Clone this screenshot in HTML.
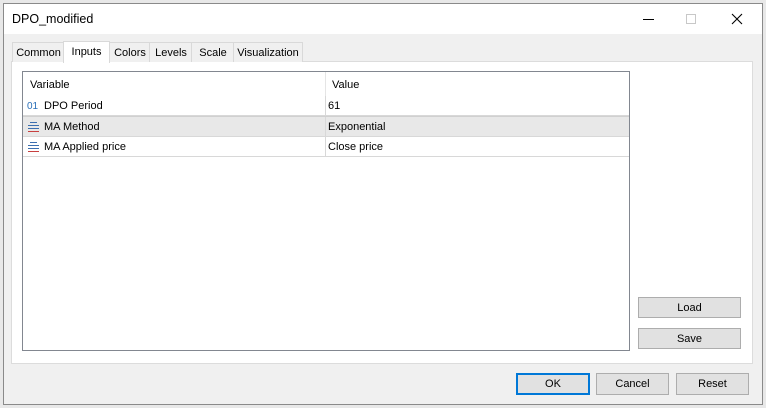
<!DOCTYPE html>
<html><head><style>
body{margin:0;width:766px;height:408px;background:#e8e8e8;font-family:"Liberation Sans",sans-serif;font-size:11px;color:#000;position:relative;overflow:hidden}
.a{position:absolute}
.win{left:3px;top:3px;width:758px;height:400px;border:1px solid #8a8a8a;background:#f0f0f0}
.title{left:0;top:0;width:758px;height:30px;background:#fff}
.tab{top:42px;height:19px;border:1px solid #d9d9d9;border-bottom:none;background:#f0f0f0;line-height:21px;text-align:center}
.btn{background:#e1e1e1;border:1px solid #adadad;text-align:center;line-height:21px;height:19px}
.row{left:23px;width:606px;height:19px;line-height:21px;border-bottom:1px solid #d8d8d8}
.sep{position:absolute;left:302px;top:0;width:1px;height:100%;background:#d8d8d8}
</style></head><body>
<div class="a win">
 <div class="a title"><span class="a" style="left:8px;top:8px;font-size:12.5px">DPO_modified</span>
  <div class="a" style="left:639px;top:15px;width:11px;height:1px;background:#000"></div>
  <div class="a" style="left:682px;top:10px;width:8px;height:8px;border:1px solid #c8c8c8"></div>
  <svg class="a" style="left:727px;top:9px" width="12" height="12"><path d="M1 1L11 11M11 1L1 11" stroke="#000" stroke-width="1.1"/></svg>
 </div>
</div>
<div class="a" style="left:11px;top:61px;width:742px;height:303px;background:#fff;border:1px solid #dcdcdc;box-sizing:border-box"></div>
<div class="a tab" style="left:12px;width:51px">Common</div>
<div class="a tab" style="left:63px;top:41px;width:45px;height:21px;background:#fff;line-height:21px">Inputs</div>
<div class="a tab" style="left:109px;width:40px">Colors</div>
<div class="a tab" style="left:149px;width:42px">Levels</div>
<div class="a tab" style="left:191px;width:42px">Scale</div>
<div class="a tab" style="left:233px;width:68px">Visualization</div>
<div class="a" style="left:22px;top:71px;width:606px;height:278px;border:1px solid #828790;background:#fff"></div>
<div class="a" style="left:23px;top:72px;width:606px;height:24px;line-height:27px"><span class="a" style="left:7px">Variable</span><div class="sep" style="background:#e5e5e5"></div><span class="a" style="left:309px">Value</span></div>
<div class="a row" style="top:96px"><span class="a" style="left:4px;color:#2a6fb8;font-size:10px">01</span><span class="a" style="left:21px">DPO Period</span><div class="sep"></div><span class="a" style="left:305px">61</span></div>
<div class="a row" style="top:116px;background:#e8e8e8;border-top:1px solid #d0d0d0;height:19px"><svg class="a" style="left:5px;top:5px" width="11" height="10"><path d="M2 0.5h7M0 3.5h11M0 6.5h11" stroke="#3c6fb0"/><path d="M0 9.5h11" stroke="#c84040"/></svg><span class="a" style="left:21px">MA Method</span><div class="sep"></div><span class="a" style="left:305px">Exponential</span></div>
<div class="a row" style="top:137px"><svg class="a" style="left:5px;top:5px" width="11" height="10"><path d="M2 0.5h7M0 3.5h11M0 6.5h11" stroke="#3c6fb0"/><path d="M0 9.5h11" stroke="#c84040"/></svg><span class="a" style="left:21px">MA Applied price</span><div class="sep"></div><span class="a" style="left:305px">Close price</span></div>
<div class="a btn" style="left:638px;top:297px;width:101px">Load</div>
<div class="a btn" style="left:638px;top:328px;width:101px">Save</div>
<div class="a btn" style="left:516px;top:373px;width:70px;border:2px solid #0078d7;height:18px;line-height:19px">OK</div>
<div class="a btn" style="left:596px;top:373px;width:71px;height:20px">Cancel</div>
<div class="a btn" style="left:676px;top:373px;width:71px;height:20px">Reset</div>
</body></html>
